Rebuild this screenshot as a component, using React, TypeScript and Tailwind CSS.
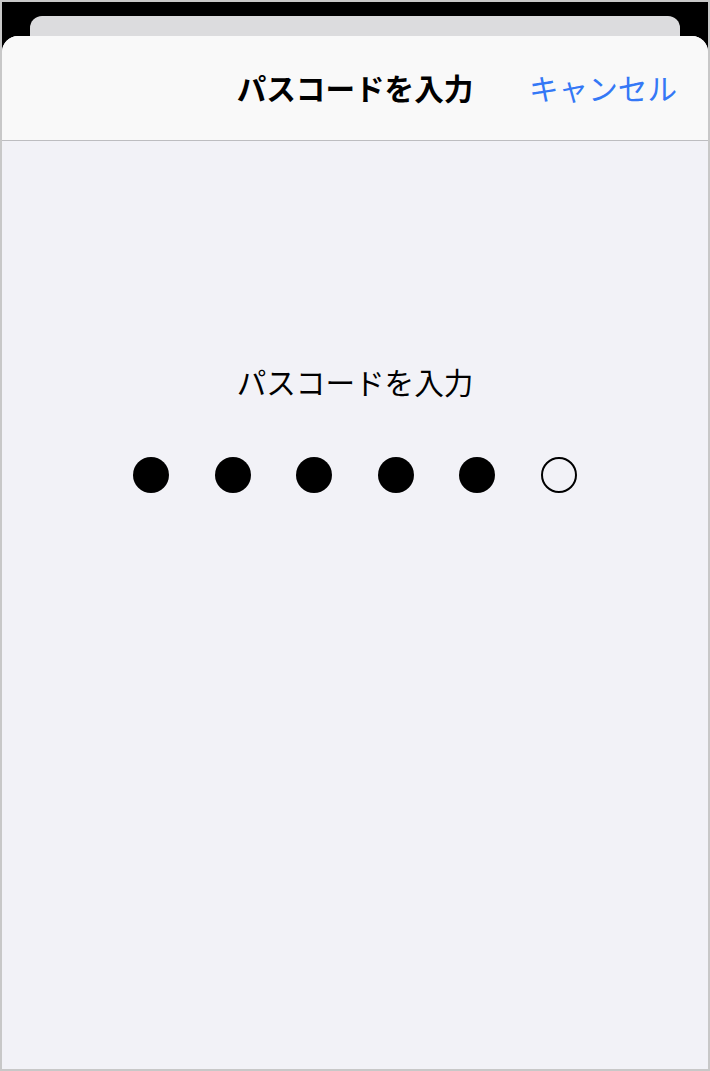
const font = { fontFamily: '"Noto Sans CJK JP", "Noto Sans", sans-serif' };

function Dot({ filled }: { filled: boolean }) {
  return filled ? (
    <div className="h-[36px] w-[36px] rounded-full bg-black" />
  ) : (
    <div className="h-[36px] w-[36px] rounded-full border-2 border-black" />
  );
}

export default function App() {
  const entered = 5;
  return (
    <div
      className="flex h-[1071px] w-[710px] flex-col bg-[#c8c8c8] p-[2px]"
      style={font}
    >
      <div className="flex flex-1 flex-col bg-black">
        <div className="mx-[28px] mt-[14px] h-[20px] rounded-t-[12px] bg-[#dcdcde]" />
        <div className="flex flex-1 flex-col overflow-hidden rounded-t-[16px] bg-[#f2f2f7]">
          <div className="grid h-[105px] grid-cols-[1fr_auto_1fr] items-center border-b border-[#bdbdc0] bg-[#f9f9f9]">
            <div />
            <h1 className="text-[29.6px] font-bold leading-none text-black">
              パスコードを入力
            </h1>
            <div className="flex justify-end pr-[31px]">
              <button className="text-[29.6px] leading-none text-[#3478f6]">
                キャンセル
              </button>
            </div>
          </div>
          <div className="flex flex-col items-center pt-[221px]">
            <p className="text-[29.6px] leading-[40px] text-black">パスコードを入力</p>
            <div className="mt-[55px] flex gap-[45.5px]">
              {[0, 1, 2, 3, 4, 5].map((i) => (
                <Dot key={i} filled={i < entered} />
              ))}
            </div>
          </div>
        </div>
      </div>
    </div>
  );
}
